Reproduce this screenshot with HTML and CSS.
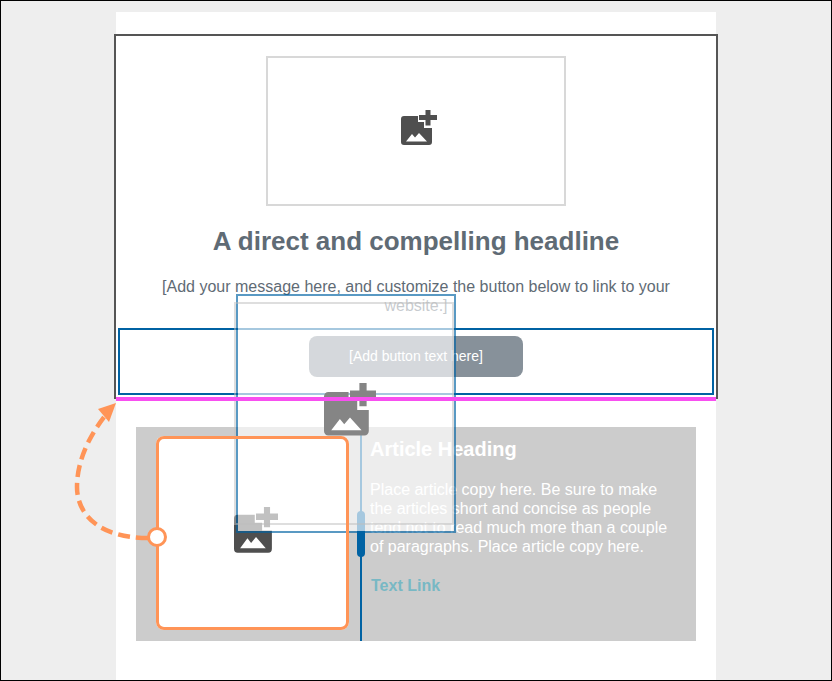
FILE: index.html
```html
<!DOCTYPE html>
<html lang="en">
<head>
    <meta charset="UTF-8">
    <title>Email layout editor</title>
    <link rel="stylesheet" href="styles.css">
</head>
<body>
    <svg class="icon-defs" width="0" height="0">
        <symbol id="add-image" viewBox="0 0 36 36" preserveAspectRatio="none">
            <path fill="currentColor" d="M3 6H17V12H23V18H31V32a3 3 0 0 1-3 3H3a3 3 0 0 1-3-3V9a3 3 0 0 1 3-3Z"/>
            <path fill="currentColor" d="M24.500 0h5v5h6.500v5h-6.500v5.500h-5V10H18V5h6.500Z"/>
            <path fill="#fff" d="M5 31.500 11 24l3 3.500L18 23l8 8.500Z"/>
        </symbol>
    </svg>

    <div class="page">
        <div class="email">
            <section class="hero">
                <div class="image-slot">
                    <svg class="icon"><use href="#add-image"/></svg>
                </div>
                <h1 class="headline">A direct and compelling headline</h1>
                <p class="message">[Add your message here, and customize the button below to link to your website.]</p>
                <div class="button-row">
                    <a class="cta" href="#">[Add button text here]</a>
                </div>
                <div class="drop-line"></div>
            </section>

            <section class="article">
                <div class="article-image">
                    <svg class="icon icon-article"><use href="#add-image"/></svg>
                    <div class="selection-frame"></div>
                    <div class="selection-knob"></div>
                </div>
                <div class="article-divider">
                    <div class="divider-grip"></div>
                </div>
                <div class="article-body">
                    <h2 class="article-title">Article Heading</h2>
                    <p class="article-copy">Place article copy here. Be sure to make the articles short and concise as people tend not to read much more than a couple of paragraphs. Place article copy here.</p>
                    <a class="article-link" href="#">Text Link</a>
                </div>
            </section>
        </div>

        <!-- block being dragged -->
        <div class="drag-ghost">
            <div class="ghost-slot"></div>
            <svg class="icon icon-ghost"><use href="#add-image"/></svg>
        </div>

        <svg class="move-arrow" width="80" height="150" viewBox="0 0 80 150">
            <path class="move-arrow-line" d="M74 138C26 138 3 115 3 87C3 60 16 35 31 16"/>
            <path class="move-arrow-head" d="M42 3 24 9 35 22Z"/>
        </svg>
    </div>
</body>
</html>
```

FILE: styles.css
```css
* {
    margin: 0;
    padding: 0;
    box-sizing: border-box;
}

body {
    font-family: "Liberation Sans", Arial, sans-serif;
    background: #eee;
}

.icon-defs {
    position: absolute;
}

.page {
    position: relative;
    height: 681px;
    border: 1px solid #000;
    display: flex;
    justify-content: center;
    overflow: hidden;
}

.email {
    width: 600px;
    margin-top: 11px;
    background: #fff;
}

/* hero block */
.hero {
    position: relative;
    margin: 22px -2px 0;
    padding-top: 20px;
    border: 2px solid #555;
    text-align: center;
}

.image-slot {
    width: 300px;
    height: 150px;
    margin: 0 auto;
    border: 2px solid #d8d8d8;
    display: flex;
    align-items: center;
    justify-content: center;
}

.icon {
    width: 36px;
    height: 36px;
    color: #4f4f4f;
    flex: none;
}

.image-slot .icon {
    margin: -6px 0 0 6px;
}

.headline {
    margin-top: 20px;
    font-size: 26px;
    line-height: 30px;
    color: #5f6b75;
}

.message {
    width: 520px;
    margin: 21px auto 0;
    font-size: 16px;
    line-height: 19px;
    color: #5f6b75;
}

.button-row {
    margin: 13px 2px 2px;
    height: 67px;
    padding-top: 6px;
    border: 2px solid #0062a3;
}

.cta {
    display: block;
    width: 214px;
    height: 41px;
    margin: 0 auto;
    border-radius: 8px;
    background: #87919a;
    color: #fff;
    font-size: 14px;
    line-height: 41px;
    text-decoration: none;
}

.drop-line {
    position: absolute;
    left: 0;
    right: 0;
    bottom: -4px;
    height: 4px;
    background: #f84ff0;
    z-index: 7;
}

/* article block */
.article {
    display: flex;
    height: 214px;
    margin: 28px 20px 0;
    background: #ccc;
}

.article-image {
    position: relative;
    width: 193px;
    height: 194px;
    margin: 9px 11px 0 20px;
    border-radius: 8px;
    background: #fff;
    display: flex;
    align-items: center;
    justify-content: center;
}

.icon-article {
    width: 44px;
    height: 47px;
    margin: -5px 0 0 7px;
}

.selection-frame {
    position: absolute;
    inset: 0;
    border: 3px solid #ff9457;
    border-radius: 8px;
    z-index: 6;
}

.selection-knob {
    position: absolute;
    left: -9px;
    top: 91px;
    width: 20px;
    height: 20px;
    border: 3px solid #ff9457;
    border-radius: 50%;
    background: #fff;
    z-index: 6;
}

.article-divider {
    position: relative;
    width: 2px;
    background: #0062a3;
}

.divider-grip {
    position: absolute;
    left: -3px;
    top: 84px;
    width: 8px;
    height: 46px;
    border-radius: 4px;
    background: #0062a3;
}

.article-body {
    padding: 10px 26px 0 8px;
    flex: 1;
    color: #fff;
}

.article-title {
    font-size: 20px;
    line-height: 24px;
}

.article-copy {
    margin-top: 19px;
    font-size: 16px;
    line-height: 19px;
}

.article-link {
    display: block;
    margin: 20px 0 0 1px;
    font-size: 16px;
    line-height: 19px;
    font-weight: bold;
    color: #78b8c4;
    text-decoration: none;
}

/* drag overlay */
.drag-ghost {
    position: absolute;
    left: 235px;
    top: 293px;
    width: 220px;
    height: 239px;
    border: 2px solid rgba(0, 98, 163, 0.65);
    background: rgba(255, 255, 255, 0.65);
    background-clip: padding-box;
    z-index: 5;
}

.ghost-slot {
    position: absolute;
    left: -4px;
    top: 6px;
    width: 220px;
    height: 223px;
    border: 2px solid rgba(190, 190, 190, 0.5);
}

.icon-ghost {
    position: absolute;
    left: 86px;
    top: 87px;
    width: 52px;
    height: 54px;
    color: #858585;
}

.move-arrow {
    position: absolute;
    left: 73px;
    top: 399px;
    z-index: 8;
}

.move-arrow-line {
    fill: none;
    stroke: #ff9457;
    stroke-width: 4.500;
    stroke-dasharray: 12 6;
}

.move-arrow-head {
    fill: #ff9457;
}
```
